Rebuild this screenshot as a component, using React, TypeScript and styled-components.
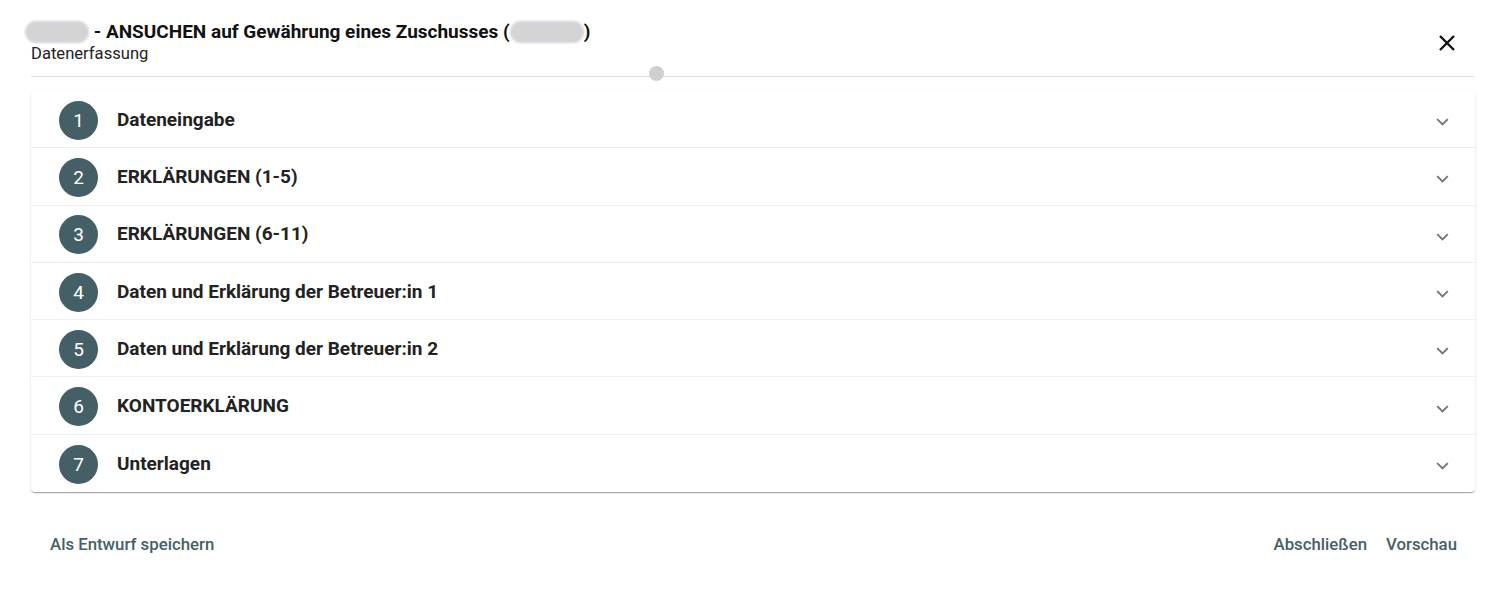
import React from "react";
import styled, { createGlobalStyle } from "styled-components";

const Global = createGlobalStyle`
  html, body { margin: 0; padding: 0; background: #fff; }
  body { font-family: Roboto, "Liberation Sans", sans-serif; color: #222; }
`;

const Page = styled.div`
  width: 1504px;
  height: 608px;
  box-sizing: border-box;
  padding: 17px 29px 0 31px;
  display: flex;
  flex-direction: column;
`;

const Header = styled.div`
  display: flex;
  justify-content: space-between;
  align-items: flex-start;
`;

const TitleBlock = styled.div`
  display: flex;
  flex-direction: column;
`;

const Title = styled.h1`
  margin: 0;
  font-size: 19px;
  font-weight: 700;
  line-height: 30px;
  color: #111;
  display: flex;
  align-items: center;
  white-space: pre;
`;

const Redacted = styled.span<{ $w: number; $ml?: number }>`
  display: inline-block;
  width: ${(p) => p.$w}px;
  height: 22px;
  border-radius: 11px;
  background: #d4d4d6;
  margin-left: ${(p) => p.$ml ?? 0}px;
  filter: blur(1px);
`;

const Subtitle = styled.div`
  font-size: 16.6px;
  line-height: 18px;
  color: #222;
  margin-top: -2px;
`;

const CloseButton = styled.button`
  border: none;
  background: none;
  padding: 0;
  margin-top: 16px;
  margin-right: 18px;
  width: 20px;
  height: 20px;
  display: flex;
  align-items: center;
  justify-content: center;
  cursor: pointer;
`;

const DividerWrap = styled.div`
  position: relative;
  margin-top: 13px;
  margin-right: 1px;
  height: 1px;
  background: #dcdcdc;
`;

const Dot = styled.span`
  position: absolute;
  left: 618px;
  top: -10px;
  width: 15px;
  height: 15px;
  border-radius: 50%;
  background: #cfcfd1;
`;

const Card = styled.div`
  margin-top: 14px;
  border-radius: 4px;
  background: #fff;
  box-shadow: 0 2px 1px -1px rgba(0, 0, 0, 0.2), 0 1px 1px 0 rgba(0, 0, 0, 0.14),
    0 1px 3px 0 rgba(0, 0, 0, 0.12);
  display: flex;
  flex-direction: column;
`;

const Row = styled.div<{ $last?: boolean }>`
  height: 57.3px;
  box-sizing: border-box;
  display: flex;
  align-items: center;
  padding: 0 21px 0 28px;
  border-bottom: ${(p) => (p.$last ? "none" : "1px solid #eeeeee")};
`;

const StepCircle = styled.div`
  width: 39px;
  height: 39px;
  border-radius: 50%;
  background: #455f66;
  color: #fff;
  font-size: 19px;
  display: flex;
  align-items: center;
  justify-content: center;
  flex-shrink: 0;
  margin-top: 2px;
`;

const StepLabel = styled.div`
  margin-left: 19px;
  font-size: 19px;
  font-weight: 700;
  color: #222;
  flex: 1;
`;

const Chevron = styled.div`
  width: 24px;
  height: 24px;
  display: flex;
  align-items: center;
  justify-content: center;
  margin-top: 6px;
`;

const Footer = styled.div`
  margin-top: 36px;
  display: flex;
  justify-content: space-between;
  align-items: center;
  padding: 0 10px 0 11px;
`;

const Actions = styled.div`
  display: flex;
  gap: 3px;
`;

const TextButton = styled.button`
  border: none;
  background: none;
  font-family: Roboto, "Liberation Sans", sans-serif;
  font-size: 16.8px;
  font-weight: 500;
  color: #455f66;
  padding: 6px 8px;
  cursor: pointer;
`;

const steps = [
  "Dateneingabe",
  "ERKLÄRUNGEN (1-5)",
  "ERKLÄRUNGEN (6-11)",
  "Daten und Erklärung der Betreuer:in 1",
  "Daten und Erklärung der Betreuer:in 2",
  "KONTOERKLÄRUNG",
  "Unterlagen",
];

export default function App() {
  return (
    <>
      <Global />
      <Page>
        <Header>
          <TitleBlock>
            <Title>
              <Redacted $w={64} $ml={-6} />
              {" - ANSUCHEN auf Gewährung eines Zuschusses ("}
              <Redacted $w={74} />
              {")"}
            </Title>
            <Subtitle>Datenerfassung</Subtitle>
          </TitleBlock>
          <CloseButton aria-label="close">
            <svg width="18" height="18" viewBox="0 0 18 18">
              <path d="M2 2 L16 16 M16 2 L2 16" stroke="#111" strokeWidth="2.4" strokeLinecap="butt" />
            </svg>
          </CloseButton>
        </Header>
        <DividerWrap>
          <Dot />
        </DividerWrap>
        <Card>
          {steps.map((s, i) => (
            <Row key={s} $last={i === steps.length - 1}>
              <StepCircle>{i + 1}</StepCircle>
              <StepLabel>{s}</StepLabel>
              <Chevron>
                <svg width="13" height="8" viewBox="0 0 13 8">
                  <path d="M1.2 1.2 L6.5 6.5 L11.8 1.2" stroke="#757575" strokeWidth="1.9" fill="none" />
                </svg>
              </Chevron>
            </Row>
          ))}
        </Card>
        <Footer>
          <TextButton>Als Entwurf speichern</TextButton>
          <Actions>
            <TextButton>Abschließen</TextButton>
            <TextButton>Vorschau</TextButton>
          </Actions>
        </Footer>
      </Page>
    </>
  );
}
